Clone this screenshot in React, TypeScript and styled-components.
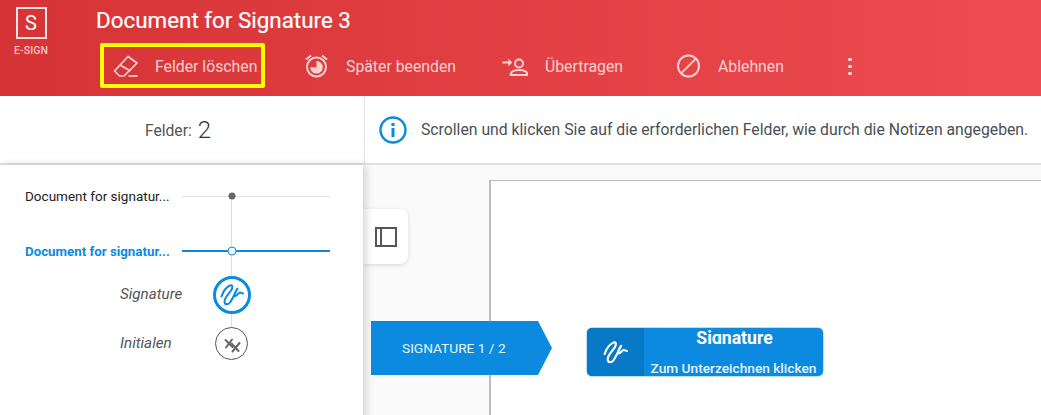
import React from "react";
import styled, { createGlobalStyle } from "styled-components";

const Global = createGlobalStyle`
  html, body { margin: 0; padding: 0; width: 100%; height: 100%; overflow: hidden; background: #fafafa; }
  * { box-sizing: border-box; }
  body { font-family: Roboto, "Liberation Sans", sans-serif; }
`;

const Page = styled.div`
  width: 1041px;
  height: 415px;
  display: flex;
  flex-direction: column;
  overflow: hidden;
  position: relative;
`;

const Header = styled.header`
  height: 96px;
  flex: none;
  display: flex;
  background: linear-gradient(90deg, #d63336 0%, #ed4c50 100%);
  color: #fff;
`;

const Brand = styled.div`
  width: 64px;
  flex: none;
  display: flex;
  flex-direction: column;
  align-items: center;
  padding-top: 7px;
  margin-right: 32px;
`;

const LogoBox = styled.div`
  width: 31px;
  height: 32px;
  margin-left: -2px;
  border: 2px solid #fbe3e3;
  display: flex;
  align-items: center;
  justify-content: center;
  font-size: 20px;
  line-height: 1;
`;

const LogoText = styled.div`
  margin-top: 5px;
  margin-left: -2px;
  font-size: 10.5px;
  font-weight: 500;
  color: #f6c4c4;
  letter-spacing: 0.1px;
`;

const HeaderBody = styled.div`
  display: flex;
  flex-direction: column;
  padding-top: 7px;
`;

const Title = styled.h1`
  margin: 0;
  font-size: 22.4px;
  line-height: 26px;
  font-weight: 400;
  color: #fff;
  -webkit-text-stroke: 0.2px #fff;
`;

const Toolbar = styled.div`
  margin-top: 10px;
  margin-left: 4px;
  display: flex;
  align-items: center;
  height: 45px;
`;

const Action = styled.button<{ $w: number; $highlight?: boolean; $gap: number }>`
  width: ${(p) => p.$w}px;
  height: 45px;
  display: flex;
  align-items: center;
  gap: ${(p) => p.$gap}px;
  padding: 1px 0 0 ${(p) => (p.$highlight ? 9 : 0)}px;
  background: none;
  border: ${(p) => (p.$highlight ? "4px solid #ffff00" : "none")};
  border-radius: 2px;
  color: #f9d0d0;
  font: 400 15.8px Roboto, sans-serif;
  white-space: nowrap;
  text-align: left;
`;

const ActionIcon = styled.svg`
  flex: none;
  width: 26px;
  height: 26px;
  fill: none;
  stroke: #f9d0d0;
  stroke-width: 2;
`;

const Dots = styled.div`
  display: flex;
  flex-direction: column;
  gap: 3.5px;
  margin-left: 1px;
  margin-top: 2px;
  span {
    width: 3.5px;
    height: 3.5px;
    border-radius: 50%;
    background: #fbe0e0;
  }
`;

const InfoBar = styled.div`
  height: 69px;
  flex: none;
  display: flex;
  background: #fff;
  border-bottom: 2px solid #e2e2e2;
`;

const Count = styled.div`
  width: 365px;
  flex: none;
  display: flex;
  align-items: center;
  justify-content: center;
  gap: 6px;
  border-right: 1px solid #e2e2e2;
  color: #555;
  font-size: 15.7px;
  padding-right: 8px;
  padding-top: 1px;
  b {
    font-weight: 300;
    font-size: 24px;
    color: #333;
  }
`;

const Notice = styled.div`
  flex: 1;
  display: flex;
  align-items: center;
  gap: 14px;
  padding: 0 0 0 14px;
  color: #4a4f55;
  font-size: 15.75px;
  white-space: nowrap;
`;

const Content = styled.div`
  flex: 1;
  display: flex;
  position: relative;
  background: #fafafa;
`;

const Sidebar = styled.aside`
  width: 363px;
  flex: none;
  background: #fff;
  box-shadow: 3px 0 8px rgba(0, 0, 0, 0.16);
  position: relative;
  z-index: 2;
  padding-top: 19px;
`;

const VLine = styled.div`
  position: absolute;
  left: 231px;
  top: 31px;
  width: 1px;
  height: 150px;
  background: #dedede;
`;

const TreeRow = styled.div<{ $active?: boolean }>`
  height: 24px;
  display: flex;
  align-items: center;
  padding-left: 25px;
  margin-bottom: 31px;
  position: relative;
  font-size: ${(p) => (p.$active ? 13.3 : 13.5)}px;
  font-weight: ${(p) => (p.$active ? 700 : 400)};
  color: ${(p) => (p.$active ? "#0b8ae0" : "#222")};
`;

const TreeLabel = styled.span`
  width: 157px;
  flex: none;
  white-space: nowrap;
`;

const Track = styled.div<{ $active?: boolean }>`
  width: 148px;
  height: ${(p) => (p.$active ? 2 : 1)}px;
  background: ${(p) => (p.$active ? "#0b8ae0" : "#e2e2e2")};
  position: relative;
`;

const Node = styled.span<{ $active?: boolean }>`
  position: absolute;
  left: 49.5px;
  top: 50%;
  transform: translate(-50%, -50%);
  width: ${(p) => (p.$active ? 9 : 7)}px;
  height: ${(p) => (p.$active ? 9 : 7)}px;
  border-radius: 50%;
  background: ${(p) => (p.$active ? "#fff" : "#666")};
  border: ${(p) => (p.$active ? "1.5px solid #0b8ae0" : "none")};
`;

const FieldRow = styled.div<{ $h: number; $mt: number }>`
  height: ${(p) => p.$h}px;
  margin-top: ${(p) => p.$mt}px;
  display: flex;
  align-items: center;
  position: relative;
  padding-left: 120px;
  font-style: italic;
  font-size: 15.2px;
  color: #555;
`;

const FieldLabel = styled.span`
  width: 111px;
  flex: none;
  margin-right: -16px;
  padding-bottom: 2px;
`;

const FieldCircle = styled.div<{ $active?: boolean }>`
  width: ${(p) => (p.$active ? 38 : 33)}px;
  height: ${(p) => (p.$active ? 38 : 33)}px;
  margin-left: ${(p) => (p.$active ? -2 : 0)}px;
  border-radius: 50%;
  background: #fff;
  border: ${(p) => (p.$active ? "3px solid #0b8ae0" : "1px solid #555")};
  display: flex;
  align-items: center;
  justify-content: center;
  position: relative;
  z-index: 1;
`;

const PanelToggle = styled.div`
  position: absolute;
  left: 363px;
  top: 44px;
  width: 45px;
  height: 55px;
  background: #fff;
  border-radius: 0 8px 8px 0;
  box-shadow: 0 1px 4px rgba(0, 0, 0, 0.14);
  display: flex;
  align-items: center;
  justify-content: center;
  padding-left: 1px;
  z-index: 1;
`;

const DocArea = styled.main`
  flex: 1;
  padding: 15px 0 0 126px;
`;

const Sheet = styled.div`
  width: 100%;
  height: 300px;
  background: #fff;
  border: 1px solid #bdbdbd;
  border-width: 1px 0 0 2px;
`;

const Tag = styled.div`
  position: absolute;
  left: 371px;
  top: 156px;
  width: 181px;
  height: 54px;
  background: #0b8ae0;
  clip-path: polygon(0 0, 167px 0, 100% 50%, 167px 100%, 0 100%);
  color: #e6f3fc;
  font-size: 13.7px;
  font-weight: 400;
  display: flex;
  align-items: center;
  padding-left: 31px;
  padding-bottom: 1px;
  z-index: 3;
`;

const SigField = styled.div`
  position: absolute;
  left: 587px;
  top: 163px;
  width: 236px;
  height: 48px;
  border-radius: 5px;
  background: #0b8ae0;
  display: flex;
  overflow: hidden;
  box-shadow: 0 0 0 0.5px #7cc0ee;
  color: #fff;
`;

const SigIcon = styled.div`
  width: 57px;
  flex: none;
  background: #0879c6;
  display: flex;
  align-items: center;
  justify-content: center;
`;

const SigBody = styled.div`
  flex: 1;
  display: flex;
  flex-direction: column;
  align-items: center;
  justify-content: space-between;
  padding-bottom: 0;
  overflow: hidden;
`;

const SigTitle = styled.div`
  font-size: 17.6px;
  font-weight: 700;
  line-height: 20px;
  height: 16px;
  overflow: hidden;
  margin-left: 2px;
`;

const SigHint = styled.div`
  font-size: 13.7px;
  font-weight: 500;
  line-height: 16px;
  color: #e3f2fc;
  white-space: nowrap;
`;

const Scribble = ({ color, size }: { color: string; size: number }) => (
  <svg width={size} height={size} viewBox="0 0 24 24" fill="none" stroke={color} strokeWidth="2" strokeLinecap="round" strokeLinejoin="round">
    <path d="M1.5 13.5 C3 9 6.5 4 10 2.5 C13 1.5 13 4.5 11 7.5 C9 10.5 4 15 4.5 19 C5 22 8 22 10 19.5 C12.5 16 15 10 17.5 5.5 C15 9 13.5 13 15 13 C17 13 18.5 9.5 20 9.5 C21 9.5 21.5 10.5 23 10.5" />
  </svg>
);

export default function App() {
  return (
    <Page>
      <Global />
      <Header>
        <Brand>
          <LogoBox>S</LogoBox>
          <LogoText>E-SIGN</LogoText>
        </Brand>
        <HeaderBody>
          <Title>Document for Signature 3</Title>
          <Toolbar>
            <Action $w={165} $highlight $gap={16} style={{ marginRight: 39 }}>
              <ActionIcon viewBox="0 0 26 26">
                <path d="M1.5 18 L15 3.5 L24 10 L11 23 L6.5 23 Z" strokeWidth="1.7" strokeLinejoin="round" />
                <path d="M7 12 L17.5 18" strokeWidth="1.7" />
                <path d="M15.5 23 H24.5" strokeWidth="1.7" />
              </ActionIcon>
              Felder löschen
            </Action>
            <Action $w={198} $gap={16}>
              <ActionIcon viewBox="0 0 26 26">
                <circle cx="12.5" cy="14" r="9.5" />
                <path d="M2 6.5 L7 2.5 M23 6.5 L18 2.5" />
                <path d="M12.5 8 A6.3 6.3 0 1 1 6.2 14.3 L12.5 14.3 Z" fill="#f9d0d0" stroke="none" />
              </ActionIcon>
              Später beenden
            </Action>
            <Action $w={174} $gap={17}>
              <ActionIcon viewBox="0 0 26 26">
                <path d="M0.5 9.5 H7.5" />
                <path d="M6.5 6.3 L10 9.5 L6.5 12.7 Z" fill="#f9d0d0" strokeWidth="0.6" />
                <circle cx="17" cy="10.5" r="4" />
                <path d="M8.5 22 C8.5 18 13 17 17 17 C21 17 25.5 18 25.5 22 Z" strokeLinejoin="round" />
              </ActionIcon>
              Übertragen
            </Action>
            <Action $w={171} $gap={16}>
              <ActionIcon viewBox="0 0 26 26">
                <circle cx="12.5" cy="13" r="10.5" />
                <path d="M5.1 20.4 L19.9 5.6" />
              </ActionIcon>
              Ablehnen
            </Action>
            <Dots>
              <span />
              <span />
              <span />
            </Dots>
          </Toolbar>
        </HeaderBody>
      </Header>

      <InfoBar>
        <Count>
          Felder: <b>2</b>
        </Count>
        <Notice>
          <svg width="28" height="28" viewBox="0 0 28 28" fill="none">
            <circle cx="14" cy="14" r="12.5" stroke="#0b8ae0" strokeWidth="2.4" />
            <circle cx="14" cy="8.5" r="1.8" fill="#0b8ae0" />
            <rect x="12.5" y="12" width="3" height="9" fill="#0b8ae0" />
          </svg>
          Scrollen und klicken Sie auf die erforderlichen Felder, wie durch die Notizen angegeben.
        </Notice>
      </InfoBar>

      <Content>
        <Sidebar>
          <VLine />
          <TreeRow>
            <TreeLabel>Document for signatur...</TreeLabel>
            <Track>
              <Node />
            </Track>
          </TreeRow>
          <TreeRow $active>
            <TreeLabel>Document for signatur...</TreeLabel>
            <Track $active>
              <Node $active />
            </Track>
          </TreeRow>
          <FieldRow $h={38} $mt={-18}>
            <FieldLabel>Signature</FieldLabel>
            <FieldCircle $active>
              <Scribble color="#0b8ae0" size={24} />
            </FieldCircle>
          </FieldRow>
          <FieldRow $h={33} $mt={13}>
            <FieldLabel>Initialen</FieldLabel>
            <FieldCircle>
              <svg width="24" height="24" viewBox="0 0 24 24" fill="none" stroke="#666" strokeWidth="2" strokeLinecap="round">
                <path d="M5.5 8 L12.5 15 M12 7.5 L6 15.5" />
                <path d="M11.5 11.5 L18.5 19 M19.5 11 L12.5 19.5" />
              </svg>
            </FieldCircle>
          </FieldRow>
        </Sidebar>
        <PanelToggle>
          <svg width="22" height="20" viewBox="0 0 22 20" fill="none" stroke="#555" strokeWidth="2">
            <rect x="1" y="1" width="20" height="18" />
            <path d="M6 1 V19" />
          </svg>
        </PanelToggle>
        <DocArea>
          <Sheet />
        </DocArea>
        <Tag>SIGNATURE 1 / 2</Tag>
        <SigField>
          <SigIcon>
            <Scribble color="#fff" size={25} />
          </SigIcon>
          <SigBody>
            <SigTitle>Signature</SigTitle>
            <SigHint>Zum Unterzeichnen klicken</SigHint>
          </SigBody>
        </SigField>
      </Content>
    </Page>
  );
}
